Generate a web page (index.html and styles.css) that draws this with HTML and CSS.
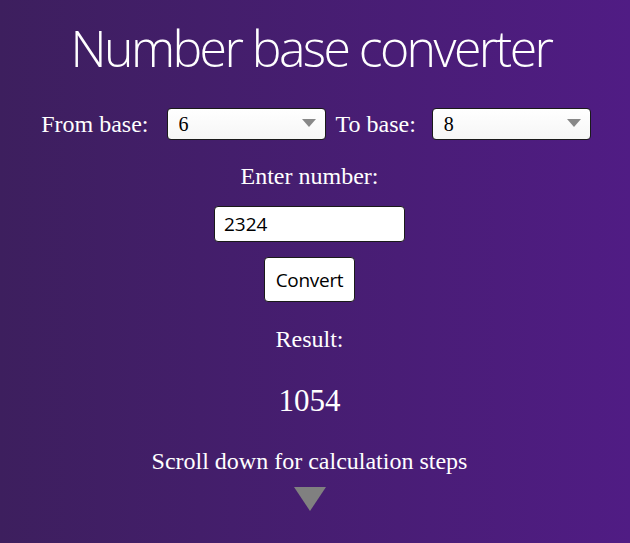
FILE: index.html
```html
<!DOCTYPE html>
<html lang="en">
<head>
<meta charset="utf-8">
<title>Number base converter</title>
<link rel="stylesheet" href="styles.css">
</head>
<body>
<main class="page">
  <h1 class="title">Number base converter</h1>
  <div class="bases">
    <label class="label label-from" for="from">From base:</label>
    <div class="select-wrap">
      <select id="from" class="select"><option>6</option></select>
    </div>
    <label class="label label-to" for="to">To base:</label>
    <div class="select-wrap">
      <select id="to" class="select"><option>8</option></select>
    </div>
  </div>
  <p class="label enter">Enter number:</p>
  <input class="number" type="text" value="2324">
  <button class="convert" type="button">Convert</button>
  <p class="label result-label">Result:</p>
  <p class="result">1054</p>
  <p class="label scroll">Scroll down for calculation steps</p>
  <div class="down-arrow"></div>
</main>
</body>
</html>
```

FILE: styles.css
```css
html, body {
  margin: 0;
  padding: 0;
}
body {
  width: 630px;
  height: 543px;
  overflow: hidden;
  background: linear-gradient(to right, #3d1f5e, #501c84);
  color: #ffffff;
  font-family: "Liberation Serif", "Times New Roman", serif;
}
.page {
  width: 619px;
  display: flex;
  flex-direction: column;
  align-items: center;
}
.title {
  margin: 18px 0 0 3px;
  font-family: "Open Sans", "Noto Sans", sans-serif;
  font-weight: 340;
  font-size: 50px;
  line-height: 60px;
  letter-spacing: -2.6px;
}
.bases {
  display: flex;
  align-items: center;
  margin-top: 30px;
  padding-left: 13px;
}
.label {
  margin: 0;
  font-size: 24px;
  line-height: 28px;
}
.label-from {
  margin-right: 18px;
}
.label-to {
  margin: 0 16px 0 10px;
}
.select-wrap {
  position: relative;
}
.select-wrap::after {
  content: "";
  position: absolute;
  right: 10px;
  top: 11px;
  border-left: 7px solid transparent;
  border-right: 7px solid transparent;
  border-top: 8px solid #888888;
  pointer-events: none;
}
.select {
  appearance: none;
  -webkit-appearance: none;
  width: 159px;
  height: 32px;
  padding: 0 0 0 11px;
  border: 1px solid #1a1a1a;
  border-radius: 4px;
  background: linear-gradient(#ffffff, #f6f6f6);
  color: #000000;
  font-family: "Liberation Serif", "Times New Roman", serif;
  font-size: 20px;
}
.enter {
  margin-top: 22px;
}
.number {
  box-sizing: border-box;
  width: 191px;
  height: 36px;
  margin-top: 16px;
  padding: 0 9px;
  border: 1px solid #1a1a1a;
  border-radius: 4px;
  background: #ffffff;
  color: #000000;
  font-family: "Open Sans", "Noto Sans", sans-serif;
  font-size: 19px;
}
.convert {
  box-sizing: border-box;
  width: 91px;
  height: 45px;
  margin-top: 15px;
  padding: 0;
  border: 1px solid #1a1a1a;
  border-radius: 4px;
  background: #ffffff;
  color: #000000;
  font-family: "Open Sans", "Noto Sans", sans-serif;
  font-size: 19px;
  letter-spacing: -0.3px;
}
.result-label {
  margin-top: 23px;
}
.result {
  margin: 30px 0 0;
  font-size: 31px;
  line-height: 36px;
}
.scroll {
  margin-top: 28px;
}
.down-arrow {
  width: 0;
  height: 0;
  margin-top: 12px;
  border-left: 16px solid transparent;
  border-right: 16px solid transparent;
  border-top: 24px solid #808080;
}
```
